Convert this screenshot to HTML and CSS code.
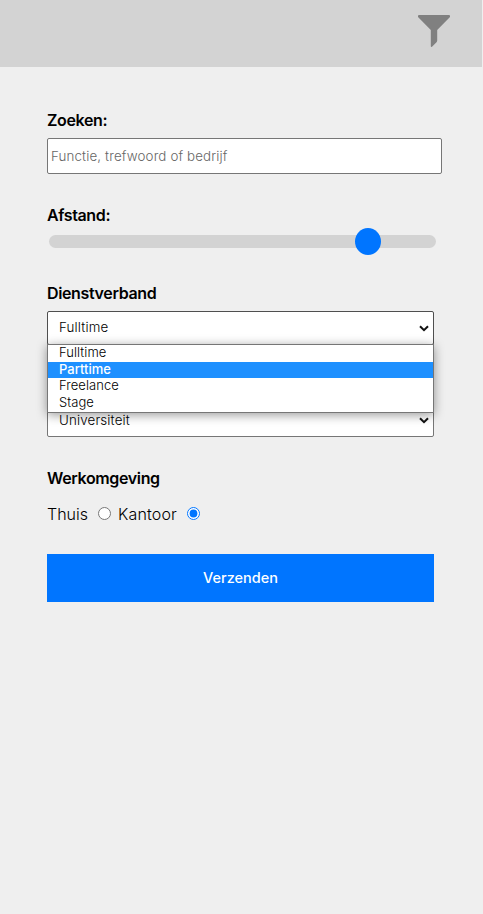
FILE: index.html
```html
<!DOCTYPE html>
<html lang="nl">
<head>
<meta charset="utf-8">
<title>Vacatures filteren</title>
<link rel="stylesheet" href="styles.css">
</head>
<body>
<header class="topbar">
  <svg class="filter-icon" viewBox="0 0 32 32" aria-hidden="true"><path d="M1 0H31Q32 0 32 1V2L19.2 15V25.5Q19.2 26.5 18.5 27.2L14 31.7Q13.4 32.3 12.8 31.5V15L0 2V1Q0 0 1 0Z"/></svg>
</header>
<form class="filters">
  <label class="label" for="search">Zoeken:</label>
  <input class="search" id="search" type="text" placeholder="Functie, trefwoord of bedrijf">
  <label class="label label-distance" for="distance">Afstand:</label>
  <input class="distance" id="distance" type="range" min="0" max="1000" value="848">
  <div class="label label-contract">Dienstverband</div>
  <div class="select-group">
    <div class="select select-open"><span>Fulltime</span><svg class="chevron" viewBox="0 0 10 7"><path d="M1 1.2L5 5.2L9 1.2"/></svg></div>
    <div class="select select-education"><span>Universiteit</span><svg class="chevron" viewBox="0 0 10 7"><path d="M1 1.2L5 5.2L9 1.2"/></svg></div>
    <ul class="options">
      <li>Fulltime</li>
      <li class="active">Parttime</li>
      <li>Freelance</li>
      <li>Stage</li>
    </ul>
  </div>
  <div class="label label-place">Werkomgeving</div>
  <div class="radios">
    <label class="home" for="home">Thuis</label><input type="radio" name="place" id="home">
    <label class="office" for="office">Kantoor</label><input type="radio" name="place" id="office" checked>
  </div>
  <button class="submit" type="button">Verzenden</button>
</form>
</body>
</html>
```
FILE: styles.css
```css
* { box-sizing: border-box; }
body { margin: 0; background: #efefef; color: #000; font: 300 16px/20px Inter, sans-serif; }
.topbar { width: 482px; height: 67px; background: #d3d3d3; display: flex; justify-content: flex-end; padding: 15px 32px 0 0; }
.filter-icon { width: 32px; height: 32px; fill: #808080; }
.filters { width: 387px; margin: 44px 0 0 47px; display: flex; flex-direction: column; }
.label { font-weight: 600; height: 20px; line-height: 18px; letter-spacing: -.36px; }
.search { width: 395px; height: 36px; margin: 7px 0 0; padding: 1px 3px; border: 1px solid #767676; border-radius: 2px; background: #fff; font: 300 13.333px Inter, sans-serif; letter-spacing: .14px; }
.search::placeholder { color: #666; }
.label-distance { margin-top: 32px; }
.distance { appearance: none; width: 387px; height: 13px; margin: 9px 0 0 2px; border-radius: 7px; background: #d3d3d3; }
.distance::-webkit-slider-thumb { appearance: none; width: 26px; height: 27px; border-radius: 50%; background: #0075ff; }
.label-contract { margin-top: 36px; }
.select-group { position: relative; height: 126px; margin-top: 7px; display: flex; flex-direction: column; justify-content: space-between; }
.select { height: 34px; border: 1px solid #767676; border-radius: 2px; background: #fff; padding: 0 4px 0 11px; display: flex; align-items: center; justify-content: space-between; font-size: 13.333px; letter-spacing: .15px; }
.select-open { border-color: #4f4f4f; }
.select-open span { margin-top: -2px; }
.chevron { width: 10px; height: 7px; fill: none; stroke: #111; stroke-width: 2; }
.options { position: absolute; left: 0; right: 0; top: 33px; height: 69px; margin: 0; padding: 0; border: 1px solid #767676; background: #fff; list-style: none; box-shadow: 0 2px 10px rgba(0,0,0,.4); font-size: 13px; letter-spacing: .05px; line-height: 15px; }
.options li { height: 17px; padding-left: 11px; }
.options .active { height: 16px; background: #1e90ff; color: #fff; font-weight: 500; letter-spacing: 0; }
.label-place { margin-top: 32px; }
.radios { display: flex; height: 20px; margin-top: 16px; line-height: 18px; }
.radios input { width: 13px; height: 13px; margin: 2px 0 0; accent-color: #0075ff; }
.home { width: 51px; }
.office { width: 69px; margin-left: 7px; letter-spacing: .15px; }
.submit { height: 48px; margin-top: 29px; padding: 0 0 2px; border: 0; background: #0075ff; color: #fff; font: 500 14.5px Inter, sans-serif; }
```
